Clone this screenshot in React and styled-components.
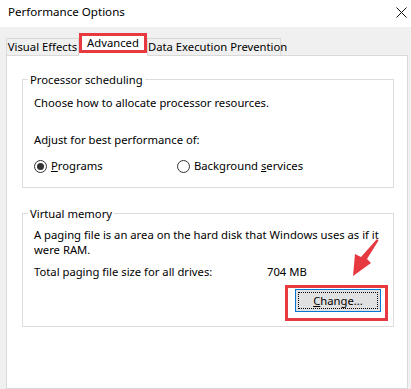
import React from "react";
import styled, { createGlobalStyle } from "styled-components";

const FS = "11.25px";

const Global = createGlobalStyle`
  html, body { margin: 0; padding: 0; overflow: hidden; background: #fff; }
  body { font-family: "Noto Sans", "Segoe UI", sans-serif; font-size: ${FS}; color: #000; }
`;

const Window = styled.div`
  position: relative;
  width: 411px;
  height: 389px;
  display: flex;
  flex-direction: column;
  overflow: hidden;
`;

const TitleBar = styled.div`
  height: 27px;
  flex: none;
  background: #fff;
  display: flex;
  align-items: center;
  justify-content: space-between;
  padding: 0 4px 3px 8px;
  box-sizing: border-box;
`;

const Title = styled.span`
  font-size: 11.6px;
  line-height: 16px;
`;

const Body = styled.div`
  flex: 1;
  display: flex;
  flex-direction: column;
  background: #f0f0f0;
  padding: 6px 3px 0 6px;
`;

const TabStrip = styled.div`
  display: flex;
  align-items: flex-end;
  flex: none;
`;

const Tab = styled.div`
  box-sizing: border-box;
  width: ${(p) => p.$w}px;
  height: 17px;
  border: 1px solid #d9d9d9;
  border-bottom: none;
  background: #f0f0f0;
  text-align: center;
  line-height: 16px;
  white-space: nowrap;
`;

const SelectedTab = styled.div`
  position: relative;
  z-index: 1;
  width: ${(p) => p.$w}px;
  background: #fff;
  padding-bottom: 3px;
  margin-bottom: -1px;
`;

const RedBox = styled.div`
  box-sizing: border-box;
  height: 20px;
  border: 3px solid #e63a40;
  text-align: center;
  line-height: 13px;
  white-space: nowrap;
`;

const Panel = styled.div`
  flex: 1;
  background: #fff;
  border: 1px solid #d9d9d9;
  padding: 16px 13px 0 15px;
`;

const Group = styled.fieldset`
  margin: ${(p) => p.$mt || 0}px 0 0 0;
  padding: 0 11px ${(p) => p.$pb}px 11px;
  border: 1px solid #dcdcdc;
  min-width: 0;
`;

const Legend = styled.legend`
  padding: 0 2px;
  margin-left: -6px;
  line-height: 15px;
`;

const Line = styled.div`
  line-height: ${(p) => p.$lh || 16}px;
  margin-top: ${(p) => p.$mt || 0}px;
  white-space: nowrap;
`;

const RadioRow = styled.div`
  display: flex;
  align-items: center;
  height: 16px;
  margin-top: 10px;
`;

const RadioOption = styled.label`
  display: flex;
  align-items: center;
  gap: 4px;
  width: ${(p) => (p.$w ? `${p.$w}px` : "auto")};
  line-height: 16px;
`;

const RadioCircle = styled.span`
  box-sizing: border-box;
  width: 13px;
  height: 13px;
  border-radius: 50%;
  border: 1px solid #333;
  background: #fff;
  display: flex;
  align-items: center;
  justify-content: center;
  &::after {
    content: "";
    width: 7px;
    height: 7px;
    border-radius: 50%;
    background: ${(p) => (p.$checked ? "#333" : "transparent")};
  }
`;

const InfoRow = styled.div`
  display: flex;
  line-height: 16px;
  margin-top: 7px;
`;

const InfoLabel = styled.span`
  width: 233px;
`;

const ButtonRow = styled.div`
  display: flex;
  justify-content: flex-end;
  margin: 5px -6px 0 0;
`;

const ButtonFrame = styled.div`
  border: 3px solid #e63a40;
  padding: 1px 4px 6px 7px;
`;

const Button = styled.button`
  position: relative;
  width: 86px;
  height: 23px;
  background: #e1e1e1;
  border: 1px solid #0078d7;
  font: inherit;
  font-size: ${FS};
  color: #000;
  padding: 0;
  &::after {
    content: "";
    position: absolute;
    inset: 2px;
    border: 1px dotted #000;
  }
`;

const Arrow = styled.svg`
  position: absolute;
  left: 345px;
  top: 236px;
`;

export default function App() {
  return (
    <>
      <Global />
      <Window>
        <TitleBar>
          <Title>Performance Options</Title>
          <svg width="11" height="11" viewBox="0 0 11 11">
            <path d="M0.5 0.5 L10.5 10.5 M10.5 0.5 L0.5 10.5" stroke="#111" strokeWidth="1" />
          </svg>
        </TitleBar>
        <Body>
          <TabStrip>
            <Tab $w={73}>Visual Effects</Tab>
            <SelectedTab $w={68}>
              <RedBox>Advanced</RedBox>
            </SelectedTab>
            <Tab $w={134}>Data Execution Prevention</Tab>
          </TabStrip>
          <Panel>
            <Group $pb={13}>
              <Legend>Processor scheduling</Legend>
              <Line $mt={8}>Choose how to allocate processor resources.</Line>
              <Line $mt={21}>Adjust for best performance of:</Line>
              <RadioRow>
                <RadioOption $w={143}>
                  <RadioCircle $checked />
                  <span><u>P</u>rograms</span>
                </RadioOption>
                <RadioOption>
                  <RadioCircle />
                  <span>Background <u>s</u>ervices</span>
                </RadioOption>
              </RadioRow>
            </Group>
            <Group $mt={18} $pb={5}>
              <Legend>Virtual memory</Legend>
              <Line $lh={15} $mt={6}>
                A paging file is an area on the hard disk that Windows uses as if it
              </Line>
              <Line $lh={15}>were RAM.</Line>
              <InfoRow>
                <InfoLabel>Total paging file size for all drives:</InfoLabel>
                <span>704 MB</span>
              </InfoRow>
              <ButtonRow>
                <ButtonFrame>
                  <Button>
                    <u>C</u>hange...
                  </Button>
                </ButtonFrame>
              </ButtonRow>
            </Group>
          </Panel>
        </Body>
        <Arrow width="40" height="44" viewBox="0 0 40 44">
          <path d="M32 3 L33.5 4.5 L22 23 L26 27 L8 40 L10 18 L16 21 Z" fill="#e63a40" />
        </Arrow>
      </Window>
    </>
  );
}
